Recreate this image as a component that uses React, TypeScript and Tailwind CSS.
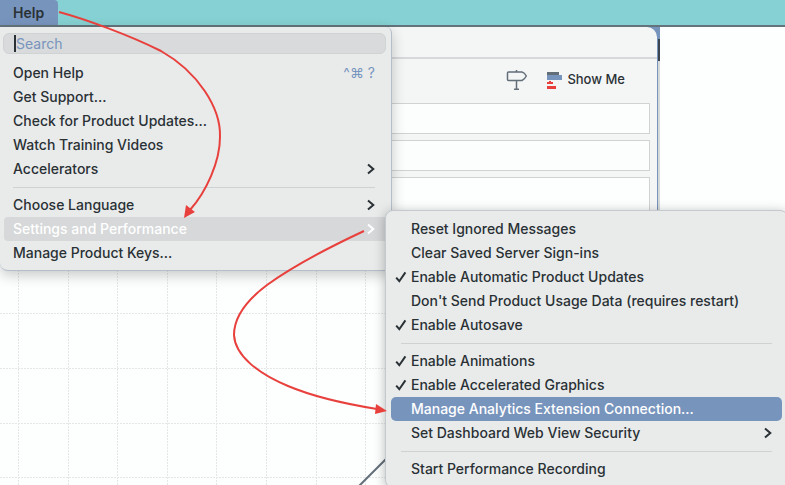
import React from "react";

type Item = {
  label: string;
  shortcut?: string;
  checked?: boolean;
  submenu?: boolean;
  state?: "open" | "active";
};

const helpMenu: (Item | null)[] = [
  { label: "Open Help", shortcut: "^⌘ ?" },
  { label: "Get Support..." },
  { label: "Check for Product Updates..." },
  { label: "Watch Training Videos" },
  { label: "Accelerators", submenu: true },
  null,
  { label: "Choose Language", submenu: true },
  { label: "Settings and Performance", submenu: true, state: "open" },
  { label: "Manage Product Keys..." },
];

const settingsMenu: (Item | null)[] = [
  { label: "Reset Ignored Messages" },
  { label: "Clear Saved Server Sign-ins" },
  { label: "Enable Automatic Product Updates", checked: true },
  { label: "Don't Send Product Usage Data (requires restart)" },
  { label: "Enable Autosave", checked: true },
  null,
  { label: "Enable Animations", checked: true },
  { label: "Enable Accelerated Graphics", checked: true },
  { label: "Manage Analytics Extension Connection...", state: "active" },
  { label: "Set Dashboard Web View Security", submenu: true },
  null,
  { label: "Start Performance Recording" },
];

function Chevron() {
  return (
    <svg className="h-3 w-2" viewBox="0 0 8 12" fill="none" stroke="currentColor" strokeWidth="2">
      <path d="M1 1.5 L6.3 6 L1 10.5" />
    </svg>
  );
}

function Check() {
  return (
    <svg className="h-3 w-3" viewBox="0 0 12 12" fill="none" stroke="currentColor" strokeWidth="2">
      <path d="M1.2 6.6 L4.3 10.2 L10.4 1.4" />
    </svg>
  );
}

function rowColour(state?: "open" | "active") {
  if (state === "active") return "bg-[#7794bd] text-white";
  if (state === "open") return "bg-[#d6d8d9] text-white";
  return "text-[#2a3135]";
}

function HelpMenu() {
  return (
    <div className="absolute left-0 top-[27px] w-[392px] rounded-b-lg rounded-tr-md border-b border-r border-[#b4bdca] bg-[#e9ebeb] pb-[5px] pt-1.5 shadow-[0_4px_14px_rgba(0,0,0,0.22)]">
      <div className="relative mb-[7px] ml-[3px] mr-[5px]">
        <input
          type="text"
          aria-label="Search"
          placeholder="Search"
          className="block h-[21px] w-full rounded-md border border-[#d0d3d4] bg-[#d8dadb] px-3 text-sm text-[#2a3135] outline-none placeholder:text-[#7794bd] placeholder:opacity-100"
        />
        <span className="absolute left-[11px] top-0.5 h-[17px] w-0.5 bg-[#2a3135]" />
      </div>
      <ul role="menu" className="pl-1">
        {helpMenu.map((item, i) =>
          item ? (
            <li key={item.label} role="none">
              <button
                role="menuitem"
                className={`flex h-6 w-full items-center justify-between whitespace-nowrap rounded pl-[9px] pr-4 text-sm font-medium ${rowColour(item.state)}`}
              >
                {item.label}
                {item.shortcut && <span className="font-normal text-[#7794bd]">{item.shortcut}</span>}
                {item.submenu && <Chevron />}
              </button>
            </li>
          ) : (
            <li key={i} role="separator" className="ml-[9px] mr-4 flex h-3 items-center">
              <span className="h-px w-full bg-[#cfd2d3]" />
            </li>
          )
        )}
      </ul>
    </div>
  );
}

function SettingsMenu() {
  return (
    <ul
      role="menu"
      className="absolute left-[385px] top-[210px] w-[403px] rounded-lg border border-[#c4c9cd] bg-[#e9ebeb] px-[5px] py-1.5 shadow-[0_2px_12px_rgba(0,0,0,0.28)]"
    >
      {settingsMenu.map((item, i) =>
        item ? (
          <li key={item.label} role="none">
            <button
              role={item.checked ? "menuitemcheckbox" : "menuitem"}
              aria-checked={item.checked ? true : undefined}
              className={`flex h-6 w-full items-center whitespace-nowrap rounded-[5px] pl-1 pr-2.5 text-sm font-medium ${rowColour(item.state)}`}
            >
              <span className="w-4 shrink-0">{item.checked && <Check />}</span>
              <span className="flex-1 text-left">{item.label}</span>
              {item.submenu && <Chevron />}
            </button>
          </li>
        ) : (
          <li key={i} role="separator" className="ml-2.5 mr-2.5 flex h-3 items-center">
            <span className="h-px w-full bg-[#cfd2d3]" />
          </li>
        )
      )}
    </ul>
  );
}

function Toolbar() {
  return (
    <div className="flex h-[44px] items-center justify-end gap-[18px] pb-0.5 pr-8 text-[#2a3135]">
      <button aria-label="Guide">
        <svg className="h-5 w-[22px]" viewBox="0 0 22 20" fill="none" stroke="#626e78" strokeWidth="1.5">
          <path d="M10.5 0 V2 M2.5 2 H16 Q18.500 2.500 20.300 6 Q18.500 9.500 16 10.500 H2.500 Q1.500 10.500 1.500 9.500 V3 Q1.500 2 2.500 2 Z M10.500 10.500 V19 M8 19.200 H13" />
        </svg>
      </button>
      <button className="flex items-center gap-[5px] text-[13px] font-medium">
        <svg className="h-[18px] w-4" viewBox="0 0 16 18">
          <path fill="#626e78" d="M1 1h12v3H1z" />
          <path fill="#7794bd" d="M1 4h15v5H1z" />
          <path fill="#e8413d" d="M1 11h2v-1h2v1h2v2H1zM1 15h9v3H1z" />
        </svg>
        Show Me
      </button>
    </div>
  );
}

const columns = Array.from({ length: 16 }, (_, i) => 18 + Math.round(i * 49.6));
const gridRows = [49, 104, 159, 213, 268];

function Workbook() {
  return (
    <div className="flex min-h-0 flex-1 bg-[#fdfefe]">
      <div className="flex min-w-0 flex-1 flex-col bg-[#7794bd]">
        <section className="flex min-h-0 flex-1 flex-col rounded-tr-[10px] bg-[#f4f5f5]">
          <div className="h-8 border-b-2 border-[#d6d8d9]" />
          <Toolbar />
          <div className="flex flex-col gap-1.5 pr-[7px]">
            <div className="h-[31px] border border-[#d0d3d4] bg-[#fcfdfd]" />
            <div className="h-[31px] border border-[#d0d3d4] bg-[#fcfdfd]" />
            <div className="h-[60px] border border-[#d0d3d4] bg-[#fdfefe]" />
          </div>
          <div className="min-h-0 flex-1 overflow-hidden bg-[#fdfefe]">
            <svg width="785" height="270" viewBox="0 -27 785 270" fill="none">
              <g stroke="#e4e6e7" strokeDasharray="2 1">
                {columns.map((x) => (
                  <path key={x} d={`M${x}.5 -27 V243`} />
                ))}
                {gridRows.map((y) => (
                  <path key={y} d={`M0 ${y}.500 H785`} />
                ))}
              </g>
              <path d="M359 222 L390 191" stroke="#626e78" strokeWidth="2" />
            </svg>
          </div>
        </section>
      </div>
      <div className="flex w-[3px] flex-col border-l border-[#7794bd] bg-[#d6d8d9]">
        <span className="h-3 bg-[#7794bd]" />
        <span className="h-[22px] bg-[#3b4550]" />
      </div>
      <div className="w-[125px]" />
    </div>
  );
}

function Arrows() {
  return (
    <svg className="pointer-events-none absolute left-0 top-0" width="785" height="485" viewBox="0 0 785 485" fill="none">
      <g stroke="#e8413d" strokeWidth="2">
        <path d="M59 12 C85 19 129 35 161 51 C198 72 221 108 220 137 C220 162 206 192 190 210" />
        <path d="M364 231 C334 245 296 264 267 285 C247 300 234 316 234 335 C235 356 259 374 288 386 C314 397 346 404 377 409" />
      </g>
      <path fill="#e8413d" d="M184 218 L186 205 L195 212 Z M387 411 L376 404 L375 414 Z" />
    </svg>
  );
}

export default function App() {
  return (
    <div className="relative flex h-screen flex-col overflow-hidden bg-[#fdfefe] font-['Inter','Liberation_Sans',sans-serif]">
      <header className="flex h-[27px] shrink-0 border-b-2 border-[#65747c] bg-[#86d1d3]">
        <button className="rounded-tr bg-[#7794bd] pl-[13px] pr-3.5 text-sm font-semibold text-[#2a3135]">Help</button>
      </header>
      <Workbook />
      <HelpMenu />
      <SettingsMenu />
      <Arrows />
    </div>
  );
}
